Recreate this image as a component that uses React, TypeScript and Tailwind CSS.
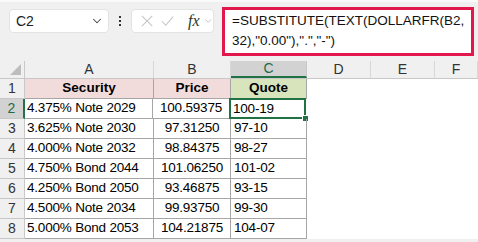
import { ChevronDown } from 'lucide-react';

const rows = [
  ['4.375% Note 2029', '100.59375', '100-19'],
  ['3.625% Note 2030', '97.31250', '97-10'],
  ['4.000% Note 2032', '98.84375', '98-27'],
  ['4.750% Bond 2044', '101.06250', '101-02'],
  ['4.250% Bond 2050', '93.46875', '93-15'],
  ['4.500% Note 2034', '99.93750', '99-30'],
  ['5.000% Bond 2053', '104.21875', '104-07'],
];

const cols = [
  { key: 'A', w: 'w-[129px]' },
  { key: 'B', w: 'w-[77px]' },
  { key: 'C', w: 'w-[76px]' },
  { key: 'D', w: 'w-[64px]' },
  { key: 'E', w: 'w-[64px]' },
  { key: 'F', w: 'flex-1' },
];

export default function App() {
  return (
    <div className="w-[478px] h-[242px] overflow-hidden bg-[#f0f0f0] font-['Liberation_Sans',sans-serif] text-black">

      {/* Formula bar */}
      <div className="h-[61px] flex items-start pl-[9px] pt-[5px] border-t-2 border-[#fafafa]">
        <div className="mt-[2px] w-[100px] h-[24px] bg-white rounded-[4px] border border-[#e3e3e3] flex items-center justify-between pl-[6px] pr-[4px]">
          <span className="text-[14px] text-[#222]">C2</span>
          <ChevronDown className="w-[14px] h-[14px] text-[#444]" strokeWidth={1.8} />
        </div>
        <div className="mt-[2px] w-[22px] h-[24px] flex flex-col items-center justify-center gap-[2px]">
          <span className="w-[2px] h-[2px] bg-[#333]" />
          <span className="w-[2px] h-[2px] bg-[#333]" />
          <span className="w-[2px] h-[2px] bg-[#333]" />
        </div>
        <div className="mt-[2px] w-[83px] h-[24px] bg-white rounded-[4px] border border-[#e3e3e3] flex items-center pl-[9px] gap-[8px]">
          <svg width="14" height="14" viewBox="0 0 14 14" fill="none" stroke="#c4c4c4" strokeWidth="1.2">
            <path d="M1 1 L13 13 M13 1 L1 13" />
          </svg>
          <svg width="15" height="12" viewBox="0 0 15 12" fill="none" stroke="#c4c4c4" strokeWidth="1.2">
            <path d="M1 6 L5.5 11 L14 1" />
          </svg>
          <span className="ml-[6px] font-['Liberation_Serif',serif] italic text-[16px] text-[#1f3a2c] leading-none">
            fx
          </span>
          <ChevronDown className="-ml-[5px] w-[12px] h-[12px] text-[#aaa]" strokeWidth={1.6} />
        </div>
        <div className="ml-[8px] w-[252px] h-[49px] bg-white border-[3px] border-[#e2184d] pl-[7px] pt-[1px] text-[13.5px] leading-[20px] text-[#111]">
          <div>=SUBSTITUTE(TEXT(DOLLARFR(B2,</div>
          <div>32),"0.00"),".","-")</div>
        </div>
      </div>

      {/* Column headers */}
      <div className="flex h-[18px] border-b border-[#c8c8c8]">
        <div className="w-[25px] border-r border-[#c8c8c8] relative">
          <svg className="absolute right-[3px] bottom-[3px]" width="11" height="11" viewBox="0 0 11 11">
            <path d="M11 0 L11 11 L0 11 Z" fill="#bdbdbd" />
          </svg>
        </div>
        {cols.map(c => (
          <div
            key={c.key}
            className={`${c.w} flex items-center justify-center text-[14px] ${
              c.key === 'C'
                ? 'bg-[#d2d2d2] text-[#1e6b45] border-b-2 border-[#217346] border-r border-r-[#c8c8c8]'
                : 'text-[#333] border-r border-[#d8d8d8]'
            }`}
          >
            {c.key}
          </div>
        ))}
      </div>

      {/* Row 1 header */}
      <div className="flex h-[20px] bg-white">
        <div className="w-[25px] bg-[#f0f0f0] border-r border-b border-[#c8c8c8] flex items-center justify-center text-[14px] text-[#333]">1</div>
        <div className="w-[129px] bg-[#f2dcdb] border-r border-b border-[#a6a6a6] flex items-center justify-center text-[13.5px] font-bold">Security</div>
        <div className="w-[77px] bg-[#f2dcdb] border-r border-b border-[#a6a6a6] flex items-center justify-center text-[13.5px] font-bold">Price</div>
        <div className="w-[76px] bg-[#d8e4bc] border-r border-b border-[#a6a6a6] flex items-center justify-center text-[13.5px] font-bold">Quote</div>
        <div className="flex-1" />
      </div>

      {rows.map((r, i) => {
        const n = i + 2;
        const sel = n === 2;
        return (
          <div key={n} className="flex h-[20px] bg-white">
            <div
              className={`w-[25px] border-b border-[#c8c8c8] flex items-center justify-center text-[14px] ${
                sel ? 'bg-[#d2d2d2] text-[#1e6b45] border-r-2 border-r-[#217346]' : 'bg-[#f0f0f0] text-[#333] border-r border-r-[#c8c8c8]'
              }`}
            >
              {n}
            </div>
            <div className={`${sel ? 'w-[128px]' : 'w-[129px]'} border-r border-b border-[#a6a6a6] flex items-center pl-[2px] text-[13.5px] tracking-[-0.2px]`}>{r[0]}</div>
            <div className="w-[77px] border-r border-b border-[#a6a6a6] flex items-center justify-center text-[13.5px] tracking-[-0.2px]">{r[1]}</div>
            <div
              className={`w-[76px] flex items-center pl-[3px] text-[13.5px] tracking-[-0.2px] relative ${
                sel ? '' : 'border-r border-b border-[#a6a6a6]'
              }`}
            >
              {sel && (
                <>
                  <div className="absolute -left-[1px] -top-[1px] w-[77px] h-[21px] border-2 border-[#217346]" />
                  <div className="absolute -right-[3px] -bottom-[3px] w-[5px] h-[5px] bg-[#217346] border border-white box-content" />
                </>
              )}
              {r[2]}
            </div>
            <div className="flex-1" />
          </div>
        );
      })}
    </div>
  );
}
